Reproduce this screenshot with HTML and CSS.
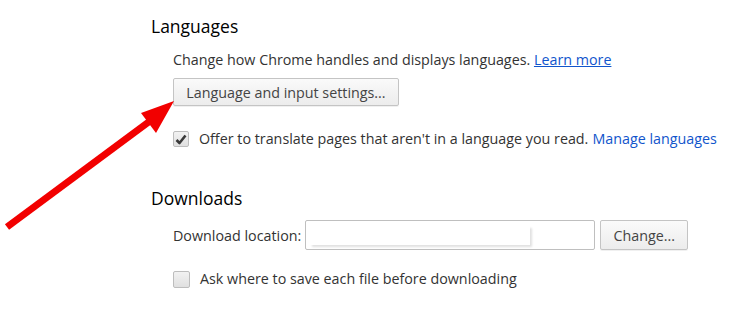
FILE: index.html
```html
<!DOCTYPE html>
<html lang="en">
<head>
  <meta charset="utf-8">
  <title>Settings</title>
  <link rel="stylesheet" href="styles.css">
</head>
<body>
  <div class="settings">
    <section class="settings-section languages">
      <h2 class="section-title">Languages</h2>
      <div class="section-body">
        <p class="setting-text">
          Change how Chrome handles and displays languages.
          <a href="#" class="link underlined">Learn more</a>
        </p>
        <button class="chrome-button lang-button">Language and input settings...</button>
        <label class="check-row">
          <span class="checkbox checked">
            <svg width="12" height="11" viewBox="0 0 12 11">
              <path d="M1.5 6 L4.5 9 L10.5 1.5" fill="none" stroke="#3a3a3a" stroke-width="2.6" stroke-linejoin="round"/>
            </svg>
          </span>
          <span>Offer to translate pages that aren't in a language you read.</span>
          <a href="#" class="link">Manage languages</a>
        </label>
      </div>
    </section>

    <section class="settings-section downloads">
      <h2 class="section-title">Downloads</h2>
      <div class="section-body">
        <div class="location-row">
          <span>Download location:</span>
          <div class="path-field">
            <div class="path-blur"></div>
          </div>
          <button class="chrome-button change-button">Change...</button>
        </div>
        <label class="check-row ask-row">
          <span class="checkbox"></span>
          <span>Ask where to save each file before downloading</span>
        </label>
      </div>
    </section>
  </div>

  <!-- annotation arrow drawn over the page -->
  <svg class="arrow" width="735" height="329" viewBox="0 0 735 329">
    <line x1="7" y1="227" x2="150" y2="121" stroke="#f20000" stroke-width="7" stroke-linecap="butt"/>
    <polygon points="174,101 141,113 156,133" fill="#f20000"/>
  </svg>
</body>
</html>
```

FILE: styles.css
```css
* {
  margin: 0;
  padding: 0;
  box-sizing: border-box;
}

body {
  font-family: "Open Sans", "Noto Sans", sans-serif;
  font-size: 14.3px;
  color: #333;
  background: #fff;
  position: relative;
  width: 735px;
  height: 329px;
  overflow: hidden;
}

.settings {
  padding: 14px 0 0 151px;
}

.section-title {
  font-size: 17.5px;
  font-weight: normal;
  color: #000;
  line-height: 24px;
}

.section-body {
  padding-left: 22px;
}

.setting-text {
  margin-top: 12px;
  line-height: 20px;
}

.link {
  color: #1155cc;
  text-decoration: none;
}

.link.underlined {
  text-decoration: underline;
}

.chrome-button {
  font-family: inherit;
  font-size: 14.3px;
  color: #444;
  background: linear-gradient(#fafafa, #ececec);
  border: 1px solid #c4c4c4;
  border-radius: 2px;
  box-shadow: 0 1px 0 rgba(0, 0, 0, 0.06);
  height: 28px;
  padding: 0 12px;
}

.lang-button {
  margin-top: 8px;
  width: 226px;
}

.check-row {
  display: flex;
  align-items: center;
  gap: 10px;
  margin-top: 23px;
  line-height: 20px;
}

.checkbox {
  width: 16px;
  height: 16px;
  border: 1px solid #bdbdbd;
  border-radius: 2px;
  background: linear-gradient(#f2f2f2, #e0e0e0);
  display: flex;
  align-items: center;
  justify-content: center;
  flex-shrink: 0;
}

.check-row .link {
  margin-left: -6px;
}

.downloads {
  margin-top: 37px;
}

.location-row {
  display: flex;
  align-items: center;
  gap: 4px;
  margin-top: 10px;
}

.path-field {
  width: 290px;
  height: 30px;
  border: 1px solid #bfbfbf;
  border-radius: 2px;
  padding: 5px 0 0 4px;
}

.path-blur {
  width: 220px;
  height: 19px;
  background: #fff;
  box-shadow: 2px 2px 2px rgba(0, 0, 0, 0.12);
}

.change-button {
  width: 88px;
  height: 30px;
  margin-left: 1px;
}

.ask-row {
  margin-top: 19px;
}

.ask-row .checkbox {
  width: 17px;
  height: 17px;
}

.arrow {
  position: absolute;
  left: 0;
  top: 0;
  pointer-events: none;
}
```
